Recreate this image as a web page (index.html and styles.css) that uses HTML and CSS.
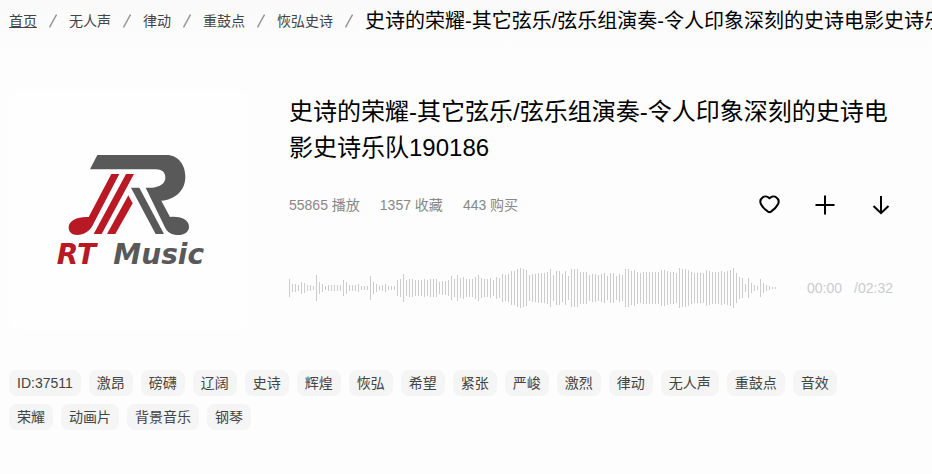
FILE: index.html
```html
<!DOCTYPE html>
<html lang="zh-CN">
<head>
<meta charset="utf-8">
<title>史诗的荣耀</title>
<link rel="stylesheet" href="styles.css">
</head>
<body>
<nav class="crumbs">
  <a class="crumb crumb-home" href="#">首页</a>
  <svg class="sep" viewBox="0 0 8 14"><path d="M.5 13.5 7.500.5"/></svg>
  <a class="crumb" href="#">无人声</a>
  <svg class="sep" viewBox="0 0 8 14"><path d="M.5 13.5 7.500.5"/></svg>
  <a class="crumb" href="#">律动</a>
  <svg class="sep" viewBox="0 0 8 14"><path d="M.5 13.5 7.500.5"/></svg>
  <a class="crumb" href="#">重鼓点</a>
  <svg class="sep" viewBox="0 0 8 14"><path d="M.5 13.5 7.500.5"/></svg>
  <a class="crumb" href="#">恢弘史诗</a>
  <svg class="sep" viewBox="0 0 8 14"><path d="M.5 13.5 7.500.5"/></svg>
  <span class="crumb-current">史诗的荣耀-其它弦乐/弦乐组演奏-令人印象深刻的史诗电影史诗乐队190186</span>
</nav>
<main>
  <section class="track">
    <svg class="cover" viewBox="27 30 720 720" role="img" aria-label="RT Music">
      <path class="gray" d="M292 225H500C535 225 556 255 556 290 556 330 528 358 484 362L510 411C535 408 567 416 567 440 567 456 552 465 535 465 515 465 502 457 494 440L437 323H458C480 320 496 310 496 293 496 276 485 268 468 268H270z"/>
      <path class="gray" d="M393 323H418L492 462H467z"/>
      <path class="red" d="M334 282H358L280 432C270 455 250 465 232 465 215 465 206 456 206 442 206 420 235 409 266 411z"/>
      <path class="red" d="M378 282H402L305 462H281z"/>
      <path class="red" d="M385 346 398 370 346 462H321z"/>
      <text class="logo-text red" x="170" y="552">RT</text>
      <text class="logo-text gray" x="340" y="552">Music</text>
    </svg>
    <div class="info">
      <h1>史诗的荣耀-其它弦乐/弦乐组演奏-令人印象深刻的史诗电影史诗乐队190186</h1>
      <div class="meta">
        <span>55865 播放</span>
        <span>1357 收藏</span>
        <span>443 购买</span>
        <div class="actions">
          <button type="button" aria-label="收藏"><svg viewBox="0 0 24 24"><path d="M12.500 5.200C10.500 3.200 7.500 3 5.800 4.300 3.300 6 2.800 8.500 3.900 11 5.500 14.200 8.500 17 11 18.700q1.500.9 3 0C16.500 17 19.500 14.200 21.100 11 22.200 8.500 21.700 6 19.200 4.300 17.500 3 14.500 3.200 12.500 5.200Z"/></svg></button>
          <button type="button" aria-label="添加"><svg viewBox="0 0 24 24"><path d="M12 2.500v19M2.500 12h19"/></svg></button>
          <button type="button" aria-label="下载"><svg viewBox="0 0 24 24"><path d="M12 3v17.500M4.500 13l7.500 7.200 7.500-7.200"/></svg></button>
        </div>
      </div>
      <div class="player">
        <svg class="wave" viewBox="0 0 489 40" role="img" aria-label="波形"><path id="bars"/></svg>
        <div class="time"><span>00:00</span><span>/02:32</span></div>
      </div>
    </div>
  </section>
  <div class="tags">
    <a href="#">ID:37511</a><a href="#">激昂</a><a href="#">磅礴</a><a href="#">辽阔</a><a href="#">史诗</a><a href="#">辉煌</a><a href="#">恢弘</a><a href="#">希望</a><a href="#">紧张</a><a href="#">严峻</a><a href="#">激烈</a><a href="#">律动</a><a href="#">无人声</a><a href="#">重鼓点</a><a href="#">音效</a><a href="#">荣耀</a><a href="#">动画片</a><a href="#">背景音乐</a><a href="#">钢琴</a>
  </div>
</main>
<script src="wave.js"></script>
</body>
</html>
```
FILE: styles.css
```css
* { box-sizing: border-box; }
body {
  margin: 0;
  background: #fdfdfd;
  color: #444;
  font: 14px/20px "Liberation Sans", "Noto Sans CJK SC", sans-serif;
}
a { color: inherit; text-decoration: none; }
.crumbs {
  display: flex;
  align-items: center;
  gap: 12px;
  height: 64px;
  padding: 0 0 22px 9px;
  overflow: hidden;
  white-space: nowrap;
  background: linear-gradient(#fafafa, #fdfdfd);
}
.crumb { flex: none; }
.crumb-home { text-decoration: underline; }
.crumb-current { flex: none; color: #000; font-size: 20px; line-height: 28px; }
.sep { flex: none; width: 8px; height: 14px; fill: none; stroke: #999; stroke-width: 1.5; }
main { padding: 26px 39px 40px 9px; }
.track { display: flex; gap: 40px; }
.cover { flex: none; width: 240px; height: 240px; border-radius: 12px; background: #fefefe; }
.gray { fill: #595959; }
.red { fill: #b91825; }
.logo-text { font: italic bold 84px "DejaVu Sans", sans-serif; }
.info { flex: 1; min-width: 0; padding-top: 4px; }
h1 { margin: 0; color: #000; font-size: 24px; font-weight: 400; line-height: 36px; }
.meta { display: flex; align-items: center; gap: 20px; height: 32px; margin-top: 23px; color: #888; }
.actions { display: flex; gap: 32px; margin-left: auto; }
button { width: 24px; height: 24px; padding: 0; border: 0; background: none; cursor: pointer; }
button svg {
  display: block;
  width: 24px;
  height: 24px;
  fill: none;
  stroke: #000;
  stroke-width: 2;
}
.player { display: flex; align-items: center; justify-content: space-between; margin-top: 47px; }
.wave { flex: none; width: 489px; height: 40px; stroke: #ccc; }
.time { display: flex; gap: 12px; color: #ccc; }
.tags { display: flex; flex-wrap: wrap; gap: 8px; margin: 40px 24px 0 0; }
.tags a { padding: 0 8px; border-radius: 8px; background: #f5f5f5; line-height: 26px; }
```
FILE: wave.js
```js
const levels = [
  18,8,8,6,12,10,6,6,4,26,12,8,4,6,6,6,6,6,16,12,6,6,6,8,4,4,4,24,12,8,4,6,8,4,4,4,
  16,18,28,16,18,18,16,16,16,18,16,18,18,18,12,14,14,16,
  24,18,26,20,22,18,18,18,22,26,20,18,18,20,16,22,20,28,26,28,34,34,38,40,38,36,
  26,28,28,30,30,30,32,38,26,34,34,28,34,24,38,38,38,32,32,32,26,28,28,26,28,30,24,
  30,30,24,28,26,38,38,34,36,32,30,32,32,32,32,32,32,36,36,34,32,32,30,40,38,38,36,
  32,30,30,30,30,36,34,32,32,32,34,32,34,36,40,30,22,20,8,20,10,6,4,18,10,6,4,2,2
];

document.getElementById("bars").setAttribute(
  "d",
  levels.map((h, i) => `M${i * 3 + 0.5} ${20 - h / 2}v${h}`).join("")
);
```
